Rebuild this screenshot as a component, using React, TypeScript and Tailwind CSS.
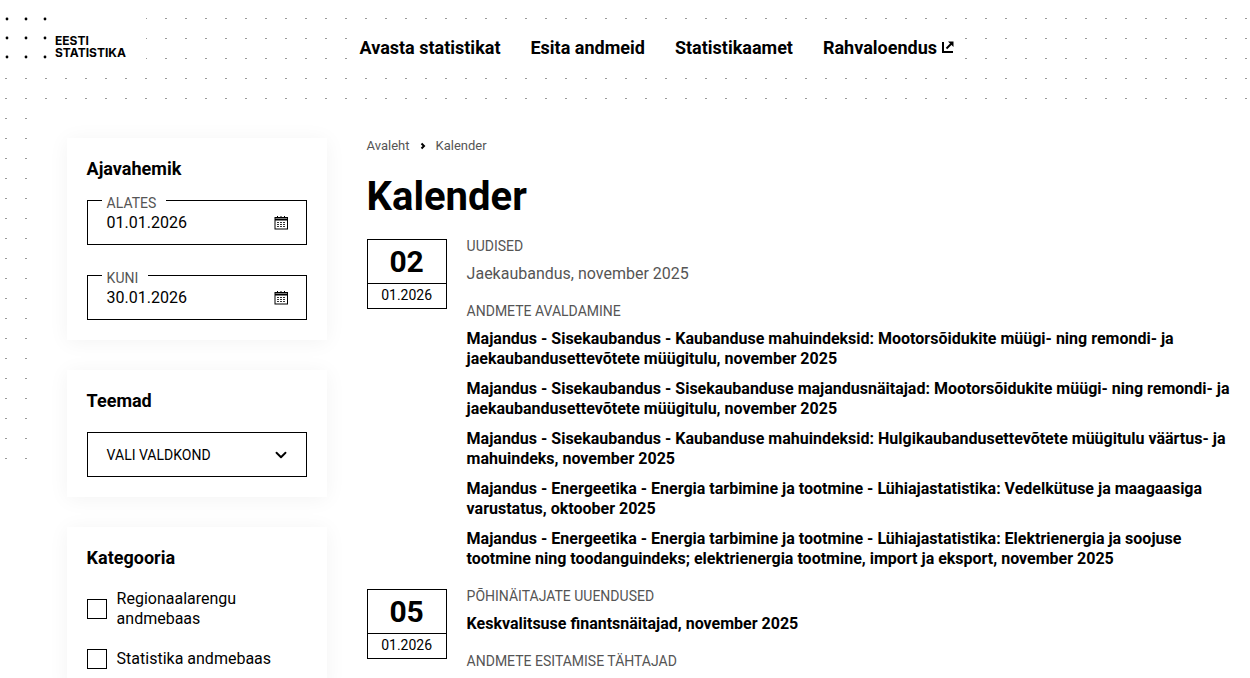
import { ChevronDown } from 'lucide-react';

const events = [
  {
    day: '02',
    groups: [
      { label: 'UUDISED', muted: true, items: ['Jaekaubandus, november 2025'] },
      {
        label: 'ANDMETE AVALDAMINE',
        items: [
          'Majandus - Sisekaubandus - Kaubanduse mahuindeksid: Mootorsõidukite müügi- ning remondi- ja jaekaubandusettevõtete müügitulu, november 2025',
          'Majandus - Sisekaubandus - Sisekaubanduse majandusnäitajad: Mootorsõidukite müügi- ning remondi- ja jaekaubandusettevõtete müügitulu, november 2025',
          'Majandus - Sisekaubandus - Kaubanduse mahuindeksid: Hulgikaubandusettevõtete müügitulu väärtus- ja mahuindeks, november 2025',
          'Majandus - Energeetika - Energia tarbimine ja tootmine - Lühiajastatistika: Vedelkütuse ja maagaasiga varustatus, oktoober 2025',
          'Majandus - Energeetika - Energia tarbimine ja tootmine - Lühiajastatistika: Elektrienergia ja soojuse tootmine ning toodanguindeks; elektrienergia tootmine, import ja eksport, november 2025',
        ],
      },
    ],
  },
  {
    day: '05',
    groups: [
      { label: 'PÕHINÄITAJATE UUENDUSED', items: ['Keskvalitsuse finantsnäitajad, november 2025'] },
      { label: 'ANDMETE ESITAMISE TÄHTAJAD', items: [] },
    ],
  },
];

function Dots() {
  return (
    <svg className="absolute left-0 top-0" width="1250" height="678">
      <defs>
        <pattern id="dots" width="20" height="20" patternUnits="userSpaceOnUse">
          <rect x="5" y="18" width="2" height="1" fill="#999" />
        </pattern>
      </defs>
      <path d="M140 8H1250V108H40V470H0V68H140Z" fill="url(#dots)" />
    </svg>
  );
}

function Logo() {
  const pos = [7, 26, 45];
  return (
    <a className="flex items-start w-[146px] h-[68px] bg-white">
      <svg className="shrink-0 mt-[8px]" width="50" height="60">
        {pos.map((x) =>
          [11, 30, 49].map((y) => <circle key={`${x}-${y}`} cx={x} cy={y} r="1.4" fill="#000" />),
        )}
      </svg>
      <span className="ml-[5px] mt-[35px] text-[12px] leading-[12px] font-bold text-black font-['Inter',sans-serif]">
        EESTI
        <br />
        STATISTIKA
      </span>
    </a>
  );
}

function CalendarIcon() {
  return (
    <svg width="14" height="14" viewBox="0 0 14 14" fill="none" className="shrink-0">
      <rect x="1" y="1.500" width="12.500" height="11.500" stroke="#000" />
      <path d="M1 3.500h13" stroke="#000" strokeWidth="2" />
      <path d="M3.500 0v2M7 0v2M10.500 0v2" stroke="#000" />
      <path d="M3 6.500h2M6 6.500h2M9 6.500h2M3 8.500h2M6 8.500h2M9 8.500h2M3 10.500h2M6 10.500h2M9 10.500h2" stroke="#333" />
    </svg>
  );
}

function DateField({ label, value }: { label: string; value: string }) {
  return (
    <fieldset className="border border-black h-[54px] pl-[19px] pr-[18px] -mt-[9px]">
      <legend className="ml-[-5px] pl-[5px] pr-[10px] pt-[5px] text-[14px] leading-[14px] text-[#555]">{label}</legend>
      <div className="flex items-center justify-between h-[24px] mt-[1px] text-[16px] text-black">
        <span>{value}</span>
        <CalendarIcon />
      </div>
    </fieldset>
  );
}

function Card({ title, children }: { title: string; children: React.ReactNode }) {
  return (
    <section className="bg-white p-[20px] shadow-[0_2px_20px_rgba(0,0,0,0.05)]">
      <h2 className="text-[18px] leading-[22px] font-bold text-black">{title}</h2>
      {children}
    </section>
  );
}

function Sidebar() {
  return (
    <aside className="w-[260px] shrink-0 flex flex-col gap-[30px]">
      <Card title="Ajavahemik">
        <div className="flex flex-col gap-[30px] mt-[20px]">
          <DateField label="ALATES" value="01.01.2026" />
          <DateField label="KUNI" value="30.01.2026" />
        </div>
      </Card>
      <Card title="Teemad">
        <div className="mt-[20px] h-[45px] border border-black flex items-center justify-between pl-[19px] pr-[16px] text-[14px] text-black">
          <span className="mt-[2px]">VALI VALDKOND</span>
          <ChevronDown size={18} strokeWidth={2.5} />
        </div>
      </Card>
      <Card title="Kategooria">
        <div className="mt-[20px] flex flex-col gap-[20px] text-[16px] leading-[20px] text-black">
          <label className="flex items-center gap-[10px]">
            <span className="w-[20px] h-[20px] border border-black shrink-0" />
            <span>
              Regionaalarengu
              <br />
              andmebaas
            </span>
          </label>
          <label className="flex items-center gap-[10px]">
            <span className="w-[20px] h-[20px] border border-black shrink-0" />
            Statistika andmebaas
          </label>
        </div>
      </Card>
    </aside>
  );
}

export default function App() {
  return (
    <div className="relative w-[1250px] h-[678px] overflow-hidden bg-white font-['Roboto',sans-serif]">
      <Dots />
      <div className="relative">
        <header className="flex items-start h-[138px]">
          <Logo />
          <nav className="flex items-center gap-[30px] ml-[203.5px] mt-[27px] h-[40px] px-[10px] bg-white text-[18px] font-bold text-black">
            <a>Avasta statistikat</a>
            <a>Esita andmeid</a>
            <a>Statistikaamet</a>
            <a className="flex items-center gap-[5px]">
              Rahvaloendus
              <svg width="12" height="12" viewBox="0 0 12 12" fill="none" stroke="#000" strokeWidth="2">
                <path d="M1 1v10h10" />
                <path d="M4.500 7.500L9.500 2.500" />
                <path d="M6 .5h5.500V6z" fill="#000" stroke="none" />
              </svg>
            </a>
          </nav>
        </header>
        <main className="flex gap-[40px] pl-[66.6px] pr-[20px]">
          <Sidebar />
          <div className="flex-1 min-w-0 pt-[1px]">
            <nav className="flex items-center h-[14px] text-[13px] leading-[14px] text-[#555]">
              Avaleht
              <svg className="mx-[10px]" width="6" height="8" viewBox="0 0 6 8" fill="none" stroke="#000" strokeWidth="2">
                <path d="M1.500 1.500L4 4 1.500 6.500" />
              </svg>
              Kalender
            </nav>
            <h1 className="mt-[20px] mb-[18px] text-[40px] leading-[48px] font-bold text-black">Kalender</h1>
            {events.map((ev) => (
              <div key={ev.day} className="flex gap-[20px] mb-[20px]">
                <div className="w-[80px] h-[70px] shrink-0 border border-black text-center text-black">
                  <div className="h-[44px] border-b border-black text-[30px] leading-[43px] font-bold">{ev.day}</div>
                  <div className="text-[14px] leading-[23px]">01.2026</div>
                </div>
                <div className="flex-1 min-w-0 flex flex-col gap-[20px]">
                  {ev.groups.map((g) => (
                    <div key={g.label}>
                      <div className="text-[14px] leading-[14px] text-[#555]">{g.label}</div>
                      <div className="mt-[11px] flex flex-col gap-[10px] text-[16px] leading-[20px]">
                        {g.items.map((t) => (
                          <a key={t} className={g.muted ? 'text-[#555]' : 'font-bold text-black'}>
                            {t}
                          </a>
                        ))}
                      </div>
                    </div>
                  ))}
                </div>
              </div>
            ))}
          </div>
        </main>
      </div>
    </div>
  );
}
